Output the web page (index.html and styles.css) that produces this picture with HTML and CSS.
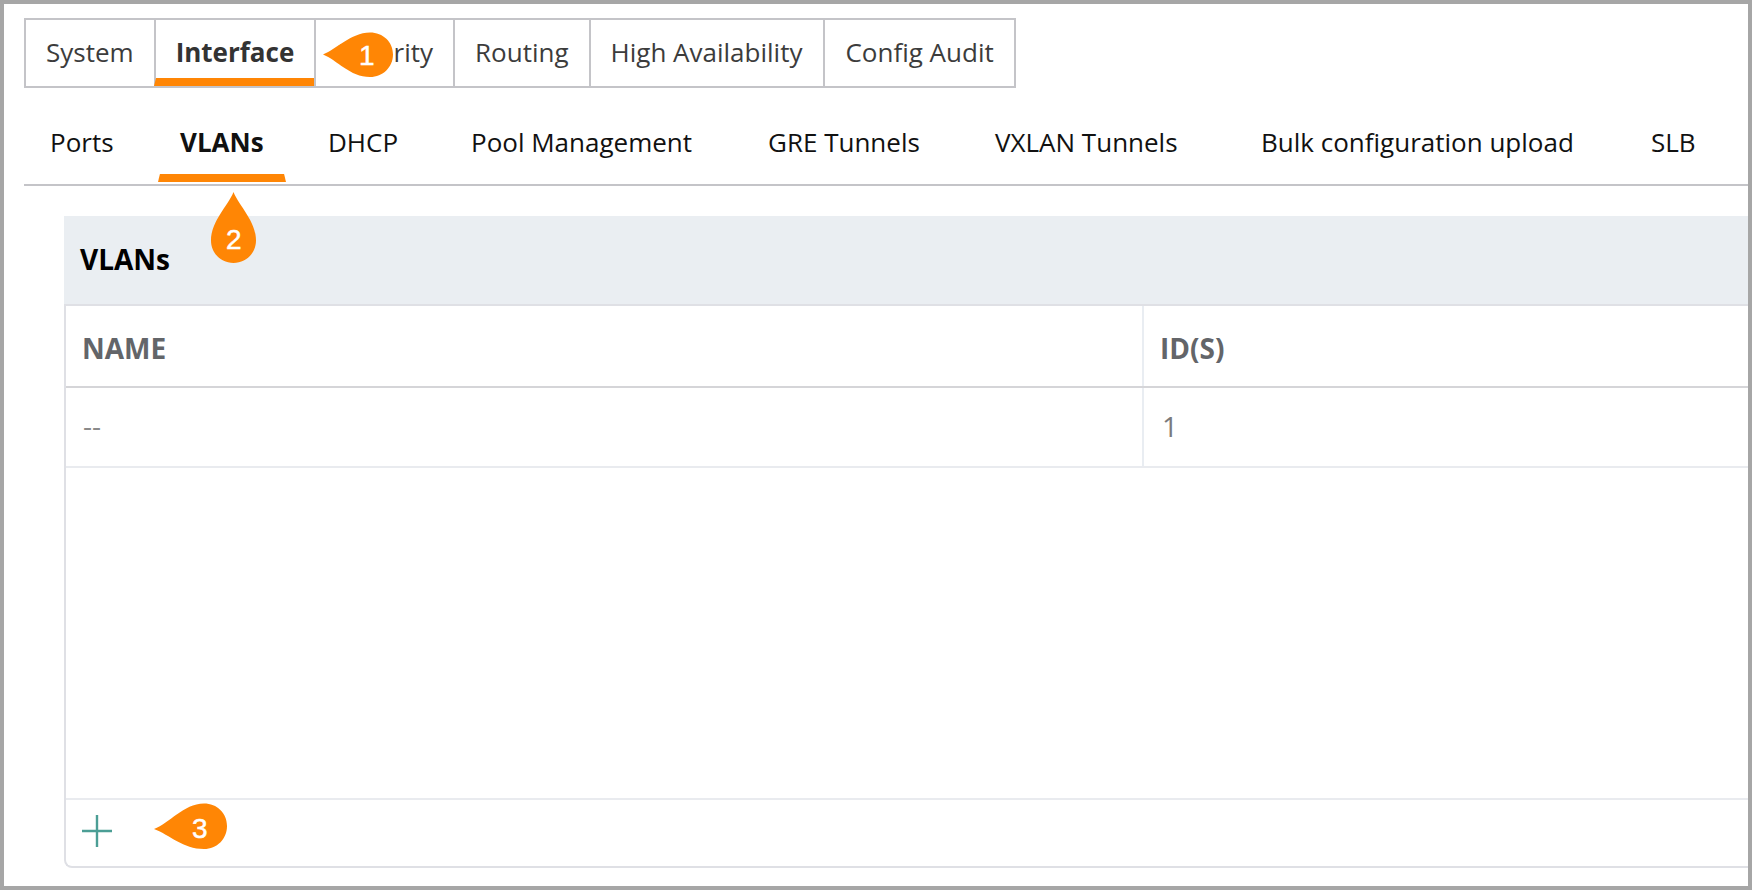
FILE: index.html
```html
<!DOCTYPE html>
<html lang="en">
<head>
<meta charset="utf-8">
<title>VLANs</title>
<link rel="stylesheet" href="styles.css">
</head>
<body>
<div class="frame">
  <nav class="tabs">
    <a class="tab">System</a>
    <a class="tab tab-active">Interface</a>
    <a class="tab">Security</a>
    <a class="tab">Routing</a>
    <a class="tab tab-wide">High Availability</a>
    <a class="tab">Config Audit</a>
  </nav>
  <nav class="subtabs">
    <a class="subtab">Ports</a>
    <a class="subtab subtab-active">VLANs</a>
    <a class="subtab">DHCP</a>
    <a class="subtab">Pool Management</a>
    <a class="subtab">GRE Tunnels</a>
    <a class="subtab">VXLAN Tunnels</a>
    <a class="subtab">Bulk configuration upload</a>
    <a class="subtab">SLB</a>
  </nav>
  <section class="panel">
    <h2 class="panel-title">VLANs</h2>
    <div class="grid-row grid-head">
      <div class="cell">NAME</div>
      <div class="cell cell-ids">ID(S)</div>
    </div>
    <div class="grid-row grid-body">
      <div class="cell cell-dash">--</div>
      <div class="cell cell-ids cell-num">1</div>
    </div>
    <div class="grid-empty"></div>
    <div class="panel-foot">
      <svg class="plus" width="32" height="34" viewBox="0 0 32 34" aria-hidden="true"><path d="M16 1V33M1 17H31" fill="none" stroke="#4b9e95" stroke-width="2.4"/></svg>
    </div>
  </section>

  <div class="callout callout-1">
    <svg width="72" height="46" viewBox="0 0 72 46" aria-hidden="true"><path d="M0 22.500C14 17 27 1 47 0.500C60 0.500 70 10 70 22.500C70 35 60 45 47 45C27 45 14 28 0 22.500Z" fill="#ff8605"/></svg>
    <span class="callout-num">1</span>
  </div>
  <div class="callout callout-2">
    <svg width="46" height="72" viewBox="0 0 46 72" aria-hidden="true"><path d="M22.500 0C28 14 45 29 45 48.500C45 61 35 71 22.500 71C10 71 0 61 0 48.500C0 29 17 14 22.500 0Z" fill="#ff8605"/></svg>
    <span class="callout-num">2</span>
  </div>
  <div class="callout callout-3">
    <svg width="74" height="46" viewBox="0 0 74 46" aria-hidden="true"><path d="M0 26C16 20 29 1 50 0.500C63 0.500 73 10 73 23C73 36 63 46 50 46C29 46 16 32 0 26Z" fill="#ff8605"/></svg>
    <span class="callout-num">3</span>
  </div>
</div>
</body>
</html>
```

FILE: styles.css
```css
* { box-sizing: border-box; }

html, body { margin: 0; padding: 0; }

body {
  background: #fff;
  font-family: "Open Sans", "Noto Sans", sans-serif;
}

.frame {
  position: relative;
  width: 1752px;
  height: 890px;
  border: 4px solid #a6a6a6;
  overflow: hidden;
  background: #fff;
  padding: 14px 0 0 20px;
  display: flex;
  flex-direction: column;
}

.tabs {
  display: flex;
  align-self: flex-start;
  height: 70px;
  border: 2px solid #c4c4c8;
}

.tab {
  display: flex;
  align-items: center;
  padding: 0 20px 2px;
  font-size: 26px;
  color: #3c3c3c;
  border-left: 2px solid #c4c4c8;
}

.tab:first-child { border-left: 0; }

.tab-wide { padding-right: 21px; }

.tab-active {
  font-weight: 700;
  color: #333;
  border-bottom: 8px solid #ff8605;
  padding-top: 8px;
  padding-bottom: 2px;
}

.subtabs {
  display: grid;
  grid-template-columns: 130px 148px 143px 297px 227px 266px 390px 1fr;
  height: 98px;
  padding: 0 0 0 26px;
  border-bottom: 2px solid #c4c4c8;
}

.subtab {
  position: relative;
  height: 96px;
  padding-top: 20px;
  font-size: 26px;
  line-height: 68px;
  color: #111;
  white-space: nowrap;
}

.subtab-active {
  font-weight: 700;
}

.subtab-active::after {
  content: "";
  position: absolute;
  left: -22px;
  bottom: 2px;
  width: 128px;
  height: 8px;
  background: #ff8605;
  clip-path: polygon(1.500% 0, 98.500% 0, 100% 100%, 0 100%);
}

.panel {
  display: flex;
  flex-direction: column;
  height: 652px;
  margin: 30px 0 0 40px;
  border: 2px solid #dfe0e5;
  border-top: 0;
  border-right: 0;
  border-radius: 0 0 0 8px;
}

.panel-title {
  margin: 0 0 0 -2px;
  height: 90px;
  padding: 0 0 0 16px;
  line-height: 87px;
  font-size: 28px;
  font-weight: 700;
  color: #000;
  background: #eaeef2;
  border-bottom: 2px solid #dfe0e5;
}

.grid-row {
  display: grid;
  grid-template-columns: 1076px 1fr;
}

.grid-head {
  height: 82px;
  border-bottom: 2px solid #d5d5d8;
  font-size: 28px;
  font-weight: 700;
  color: #636569;
}

.grid-head .cell { padding-top: 3px; }

.grid-body {
  height: 80px;
  border-bottom: 2px solid #e9ebef;
  font-size: 28px;
  color: #7a7a7c;
}

.grid-body .cell { padding-bottom: 3px; }

.cell {
  display: flex;
  align-items: center;
  padding: 0 0 0 16px;
}

.grid-row .cell-ids {
  border-left: 2px solid #e9edf2;
  padding-left: 16px;
}

.grid-row .cell-num { padding-left: 18px; }

.grid-body .cell-dash {
  color: #8a8a8a;
  padding-left: 17px;
  padding-bottom: 5px;
}

.grid-empty {
  flex: 1;
  border-bottom: 2px solid #e9ebef;
}

.panel-foot {
  display: flex;
  align-items: center;
  height: 66px;
  padding: 0 0 0 15px;
}

.plus { display: block; margin-top: -4px; }

.callout {
  position: absolute;
}

.callout svg { display: block; }

.callout-num {
  position: absolute;
  font-family: "Liberation Sans", Arial, sans-serif;
  font-size: 28px;
  line-height: 30px;
  color: #fff;
  -webkit-text-stroke: 0.5px #fff;
}

.callout-1 { left: 319px; top: 28px; }
.callout-1 .callout-num { left: 36px; top: 9px; }

.callout-2 { left: 207px; top: 188px; }
.callout-2 .callout-num { left: 15px; top: 33px; }

.callout-3 { left: 150px; top: 799px; }
.callout-3 .callout-num { left: 38px; top: 11px; }
```
